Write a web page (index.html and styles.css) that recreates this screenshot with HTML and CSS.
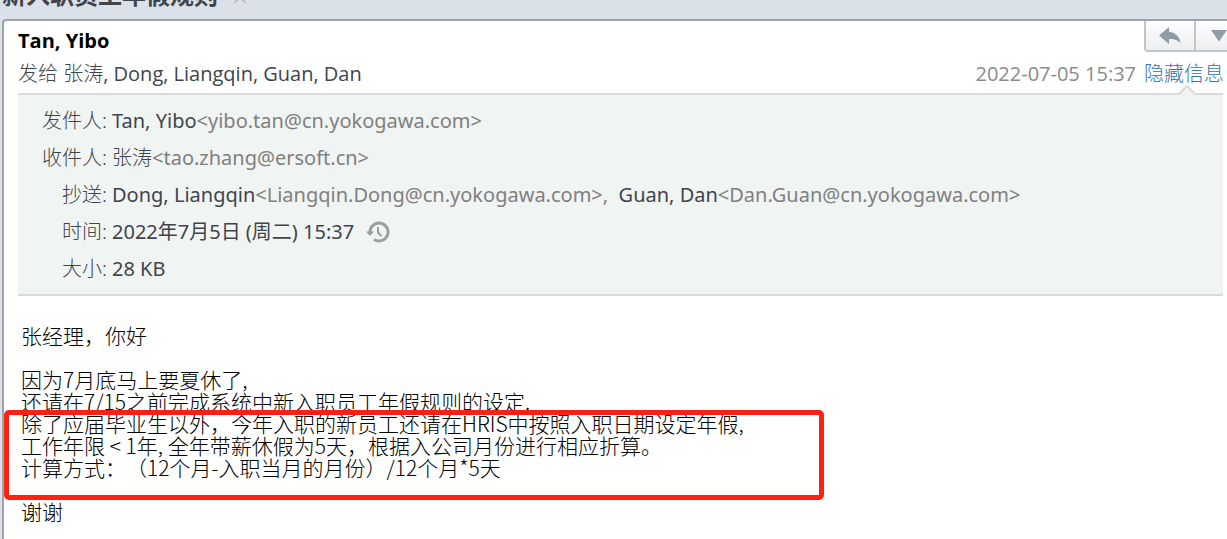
FILE: index.html
```html
<!DOCTYPE html>
<html lang="zh-CN">
<head>
    <meta charset="UTF-8">
    <meta name="viewport" content="width=device-width, initial-scale=1.0">
    <title>新入职员工年假规则</title>
    <link rel="stylesheet" href="styles.css">
</head>

<body>

    <header class="subject">
        <h1>新入职员工年假规则</h1>
        <span class="star">☆</span>
    </header>

    <main class="mail">
        <div class="mail-top">
            <h2 class="sender">Tan, Yibo</h2>
            <div class="toolbar">
                <button type="button" class="tool" aria-label="回复">
                    <svg width="22" height="18" viewBox="0 0 22 18">
                        <path d="M10 0 L0 8.5 L10 17 V12 C15 11.5 19 13 21.5 16.5 C21 10 17 5.5 10 5 Z"/>
                    </svg>
                </button>
                <button type="button" class="tool" aria-label="更多">
                    <svg width="16" height="12" viewBox="0 0 16 12">
                        <path d="M0 0 H16 L8 11.5 Z"/>
                    </svg>
                </button>
            </div>
        </div>

        <div class="summary">
            <p><span class="light">发给 张涛</span>, Dong, Liangqin, Guan, Dan</p>
            <p class="summary-right">
                <time datetime="2022-07-05T15:37">2022-07-05 15:37</time>
                <a href="#details" class="light">隐藏信息</a>
            </p>
        </div>

        <section class="details" id="details">
            <svg class="pointer" width="20" height="10" viewBox="0 0 20 10">
                <path class="pointer-fill" d="M1 10 L10 1 L19 10 Z"/>
                <path class="pointer-line" d="M0 9 H2 L10 1 L18 9 H20"/>
            </svg>
            <dl>
                <dt>发件人:</dt>
                <dd>Tan, Yibo<span class="address">&lt;yibo.tan@cn.yokogawa.com&gt;</span></dd>
                <dt>收件人:</dt>
                <dd><span class="light">张涛</span><span class="address">&lt;tao.zhang@ersoft.cn&gt;</span></dd>
                <dt>抄送:</dt>
                <dd>Dong, Liangqin<span class="address">&lt;Liangqin.Dong@cn.yokogawa.com&gt;,&nbsp;</span> Guan, Dan<span class="address">&lt;Dan.Guan@cn.yokogawa.com&gt;</span></dd>
                <dt>时间:</dt>
                <dd class="time">2022年7月5日 (周二) 15:37
                    <svg class="history" width="24" height="22" viewBox="0 0 24 22">
                        <path class="history-ring" d="M4 12 V11 A9 9 0 1 1 8 18.5"/>
                        <path class="history-hand" d="M12 6 V11.5 L15.5 15"/>
                        <path class="history-tip" d="M0 10.5 H8 L4 15 Z"/>
                    </svg>
                </dd>
                <dt>大小:</dt>
                <dd>28 KB</dd>
            </dl>
        </section>

        <article class="content">
            <p>张经理，你好</p>
            <p>因为7月底马上要夏休了,<br>
            还请在7/15之前完成系统中新入职员工年假规则的设定.</p>
            <p class="marked">除了应届毕业生以外，今年入职的新员工还请在HRIS中按照入职日期设定年假,<br>
            工作年限 &lt; 1年, 全年带薪休假为5天，根据入公司月份进行相应折算。<br>
            计算方式：（12个月-入职当月的月份）/12个月*5天</p>
            <p>谢谢</p>
        </article>
    </main>

</body>

</html>
```

FILE: styles.css
```css
*,
*::after {
    box-sizing: border-box;
}

body {
    display: flex;
    flex-direction: column;
    min-height: 100vh;
    margin: 0;
    background-color: #dbe1e8;
    color: #40454d;
    font-family: "Open Sans", "Noto Sans CJK SC", sans-serif;
    font-size: 20px;
    line-height: 28px;
    overflow-x: hidden;
}

h1, h2, p, dl, dd {
    margin: 0;
}

.light {
    font-weight: 300;
}

/* Sujet du message */
.subject {
    display: flex;
    align-items: flex-end;
    gap: 12px;
    height: 19px;
    padding: 0 2px 8px;
    overflow: hidden;
}

.subject h1 {
    font-size: 24px;
    line-height: 32px;
}

.star {
    color: #a9afb6;
    font-size: 20px;
    line-height: 32px;
}

.mail {
    flex: 1;
    margin-left: 2px;
    padding-left: 14px;
    border-top: 2px solid #9da4a8;
    border-left: 2px solid #9da4a8;
    border-top-left-radius: 4px;
    background-color: #fff;
}

.mail-top {
    display: flex;
    justify-content: space-between;
}

.sender {
    padding-top: 6px;
    color: #000;
    font-size: 20px;
    line-height: 28px;
}

.toolbar {
    display: flex;
    height: 31px;
    margin-right: -17px;
    border: 2px solid #bfc5c9;
    border-top: 0;
    border-bottom-left-radius: 4px;
}

.tool {
    display: flex;
    align-items: center;
    justify-content: center;
    width: 48px;
    padding: 0;
    border: 0;
    background: linear-gradient(#fdfdfe, #eceeef);
}

.tool + .tool {
    border-left: 2px solid #bfc5c9;
}

.tool svg {
    fill: #8f9ba8;
}

.summary {
    display: flex;
    justify-content: space-between;
    padding: 5px 3px 5px 0;
}

.summary-right {
    display: flex;
    gap: 8px;
    color: #8b8b8b;
}

.summary a {
    color: #3472b3;
    text-decoration: none;
}

/* Détails du message */
.details {
    position: relative;
    margin-right: 4px;
    padding: 7px 0;
    border-top: 2px solid #d8dadb;
    border-bottom: 2px solid #d8dadb;
    background-color: #f0f4f3;
}

.details dl {
    display: grid;
    grid-template-columns: 89px 1fr;
    column-gap: 5px;
    font-family: "Noto Sans", "Noto Sans CJK SC", sans-serif;
    line-height: 37px;
}

.details dt {
    font-weight: 300;
    text-align: right;
}

.address {
    color: #808080;
}

.time {
    display: flex;
    align-items: center;
    gap: 12px;
}

.pointer {
    position: absolute;
    top: -10px;
    right: 26px;
}

.pointer-fill {
    fill: #f0f4f3;
}

.pointer-line {
    fill: none;
    stroke: #d8dadb;
    stroke-width: 2;
}

.history-ring,
.history-hand {
    fill: none;
    stroke: #9a9fa3;
    stroke-width: 3;
}

.history-hand {
    stroke-width: 2;
}

.history-tip {
    fill: #9a9fa3;
}

/* Corps du message */
.content {
    display: flex;
    flex-direction: column;
    gap: 22px;
    padding: 28px 4px 14px 3px;
    color: #000;
    font-family: "Noto Sans CJK SC", sans-serif;
    font-size: 21px;
    font-weight: 300;
    line-height: 22px;
    text-spacing-trim: space-all;
}

.marked {
    position: relative;
    margin-top: -22px;
}

.marked::after {
    content: "";
    position: absolute;
    top: -2px;
    bottom: -22px;
    left: -17px;
    width: 820px;
    border: 5px solid #ff2011;
    border-radius: 5px;
}
```
